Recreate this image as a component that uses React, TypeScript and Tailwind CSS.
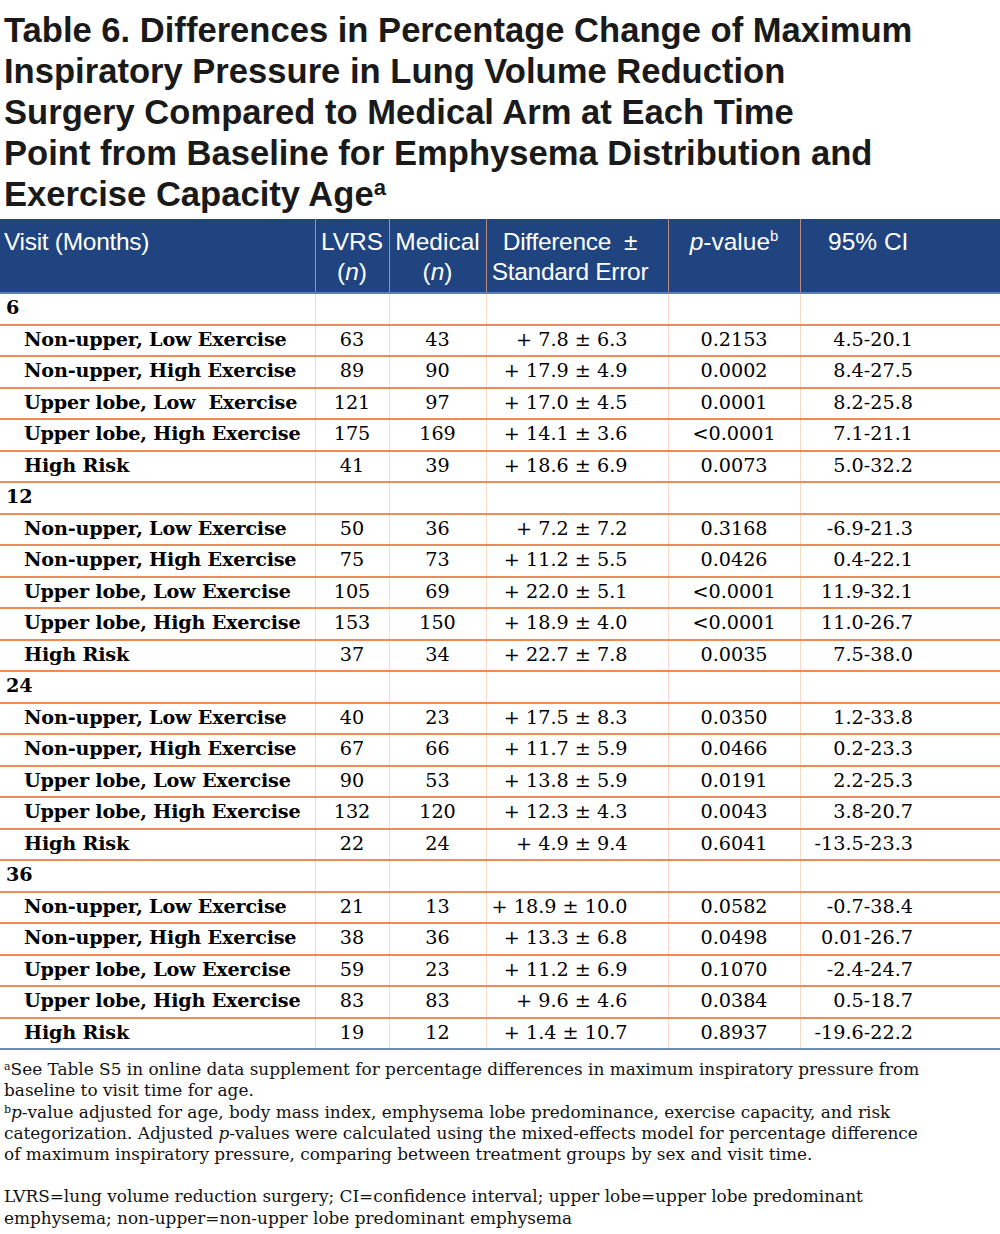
import React from 'react';

type Row = { label: string; lvrs: string; med: string; diff: string; p: string; ci: string };
type Group = { visit: string; rows: Row[] };

const groups: Group[] = [
  {
    visit: '6',
    rows: [
      { label: 'Non-upper, Low Exercise', lvrs: '63', med: '43', diff: '+ 7.8 \u00b1 6.3', p: '0.2153', ci: '4.5-20.1' },
      { label: 'Non-upper, High Exercise', lvrs: '89', med: '90', diff: '+ 17.9 \u00b1 4.9', p: '0.0002', ci: '8.4-27.5' },
      { label: 'Upper lobe, Low  Exercise', lvrs: '121', med: '97', diff: '+ 17.0 \u00b1 4.5', p: '0.0001', ci: '8.2-25.8' },
      { label: 'Upper lobe, High Exercise', lvrs: '175', med: '169', diff: '+ 14.1 \u00b1 3.6', p: '<0.0001', ci: '7.1-21.1' },
      { label: 'High Risk', lvrs: '41', med: '39', diff: '+ 18.6 \u00b1 6.9', p: '0.0073', ci: '5.0-32.2' },
    ],
  },
  {
    visit: '12',
    rows: [
      { label: 'Non-upper, Low Exercise', lvrs: '50', med: '36', diff: '+ 7.2 \u00b1 7.2', p: '0.3168', ci: '-6.9-21.3' },
      { label: 'Non-upper, High Exercise', lvrs: '75', med: '73', diff: '+ 11.2 \u00b1 5.5', p: '0.0426', ci: '0.4-22.1' },
      { label: 'Upper lobe, Low Exercise', lvrs: '105', med: '69', diff: '+ 22.0 \u00b1 5.1', p: '<0.0001', ci: '11.9-32.1' },
      { label: 'Upper lobe, High Exercise', lvrs: '153', med: '150', diff: '+ 18.9 \u00b1 4.0', p: '<0.0001', ci: '11.0-26.7' },
      { label: 'High Risk', lvrs: '37', med: '34', diff: '+ 22.7 \u00b1 7.8', p: '0.0035', ci: '7.5-38.0' },
    ],
  },
  {
    visit: '24',
    rows: [
      { label: 'Non-upper, Low Exercise', lvrs: '40', med: '23', diff: '+ 17.5 \u00b1 8.3', p: '0.0350', ci: '1.2-33.8' },
      { label: 'Non-upper, High Exercise', lvrs: '67', med: '66', diff: '+ 11.7 \u00b1 5.9', p: '0.0466', ci: '0.2-23.3' },
      { label: 'Upper lobe, Low Exercise', lvrs: '90', med: '53', diff: '+ 13.8 \u00b1 5.9', p: '0.0191', ci: '2.2-25.3' },
      { label: 'Upper lobe, High Exercise', lvrs: '132', med: '120', diff: '+ 12.3 \u00b1 4.3', p: '0.0043', ci: '3.8-20.7' },
      { label: 'High Risk', lvrs: '22', med: '24', diff: '+ 4.9 \u00b1 9.4', p: '0.6041', ci: '-13.5-23.3' },
    ],
  },
  {
    visit: '36',
    rows: [
      { label: 'Non-upper, Low Exercise', lvrs: '21', med: '13', diff: '+ 18.9 \u00b1 10.0', p: '0.0582', ci: '-0.7-38.4' },
      { label: 'Non-upper, High Exercise', lvrs: '38', med: '36', diff: '+ 13.3 \u00b1 6.8', p: '0.0498', ci: '0.01-26.7' },
      { label: 'Upper lobe, Low Exercise', lvrs: '59', med: '23', diff: '+ 11.2 \u00b1 6.9', p: '0.1070', ci: '-2.4-24.7' },
      { label: 'Upper lobe, High Exercise', lvrs: '83', med: '83', diff: '+ 9.6 \u00b1 4.6', p: '0.0384', ci: '0.5-18.7' },
      { label: 'High Risk', lvrs: '19', med: '12', diff: '+ 1.4 \u00b1 10.7', p: '0.8937', ci: '-19.6-22.2' },
    ],
  },
];

const serif = "font-['DejaVu_Serif',serif]";
const cellV = 'border-l border-[#f9d9c6]';

export default function App() {
  return (
    <div className="w-[1000px] bg-white text-black font-['Liberation_Sans',Arial,sans-serif]">
      {/* title */}
      <h1 className="pl-[4px] pt-[10px] pb-[4px] text-[34.6px] leading-[41px] font-bold text-[#1a1a1a]">
        Table 6. Differences in Percentage Change of Maximum
        <br />
        Inspiratory Pressure in Lung Volume Reduction
        <br />
        Surgery Compared to Medical Arm at Each Time
        <br />
        Point from Baseline for Emphysema Distribution and
        <br />
        Exercise Capacity Age<span className="relative top-[-11px] text-[22px] leading-none">a</span>
      </h1>

      <table className="w-[1000px] table-fixed border-collapse">
        <colgroup>
          <col className="w-[315px]" />
          <col className="w-[74px]" />
          <col className="w-[97px]" />
          <col className="w-[182px]" />
          <col className="w-[132px]" />
          <col className="w-[200px]" />
        </colgroup>
        <thead>
          <tr className="bg-[#1f4480] text-white text-[24.5px] leading-[30px] align-top border-b-2 border-[#5b7fb8]">
            <th className="h-[74px] pl-[4px] pt-[8px] text-left font-normal tracking-[-0.3px]">Visit (Months)</th>
            <th className="pt-[8px] font-normal text-center border-l border-[#b98a82]">
              LVRS<br />(<i>n</i>)
            </th>
            <th className="pt-[8px] font-normal text-center border-l border-[#b98a82]">
              Medical<br />(<i>n</i>)
            </th>
            <th className="pt-[8px] pr-[14px] font-normal text-center border-l border-[#b98a82] tracking-[-0.3px]">
              Difference &nbsp;&plusmn;<br />Standard Error
            </th>
            <th className="pt-[8px] font-normal text-center border-l border-[#b98a82]">
              <i>p</i>-value<span className="relative top-[-9px] text-[15px] leading-none">b</span>
            </th>
            <th className="pt-[8px] pr-[64px] font-normal text-center border-l border-[#b98a82]">95% CI</th>
          </tr>
        </thead>
        <tbody className={`${serif} text-[19.2px]`}>
          {groups.map((g, gi) => (
            <React.Fragment key={g.visit}>
              <tr className="border-b-2 border-[#ef8a55]">
                <td className="h-[31.5px] pl-[6px] font-bold">{g.visit}</td>
                <td className={cellV} />
                <td className={cellV} />
                <td className={cellV} />
                <td className={cellV} />
                <td className={cellV} />
              </tr>
              {g.rows.map((r, ri) => {
                const last = gi === groups.length - 1 && ri === g.rows.length - 1;
                return (
                  <tr key={ri} className={last ? 'border-b-2 border-[#6d8cbd]' : 'border-b-2 border-[#ef8a55]'}>
                    <td className="h-[31.5px] pl-[24px] font-bold whitespace-pre tracking-[-0.2px]">{r.label}</td>
                    <td className={`${cellV} text-center`}>{r.lvrs}</td>
                    <td className={`${cellV} text-center`}>{r.med}</td>
                    <td className={`${cellV} text-right pr-[40px] whitespace-pre`}>{r.diff}</td>
                    <td className={`${cellV} text-center`}>{r.p}</td>
                    <td className={`${cellV} text-right pr-[87px]`}>{r.ci}</td>
                  </tr>
                );
              })}
            </React.Fragment>
          ))}
        </tbody>
      </table>

      {/* footnotes */}
      <div className={`${serif} pl-[4px] pr-[70px] pt-[9px] pb-[4px] text-[16.9px] leading-[21.3px] text-[#111]`}>
        <p>
          <span className="relative top-[-5px] text-[11px] leading-none">a</span>See Table S5 in online data supplement
          for percentage differences in maximum inspiratory pressure from baseline to visit time for age.
        </p>
        <p>
          <span className="relative top-[-5px] text-[11px] leading-none">b</span>
          <i>p</i>-value adjusted for age, body mass index, emphysema lobe predominance, exercise capacity, and risk
          categorization. Adjusted <i>p</i>-values were calculated using the mixed-effects model for percentage difference
          of maximum inspiratory pressure, comparing between treatment groups by sex and visit time.
        </p>
        <p className="mt-[21px]">
          LVRS=lung volume reduction surgery; CI=confidence interval; upper lobe=upper lobe predominant emphysema;
          non-upper=non-upper lobe predominant emphysema
        </p>
      </div>
    </div>
  );
}
